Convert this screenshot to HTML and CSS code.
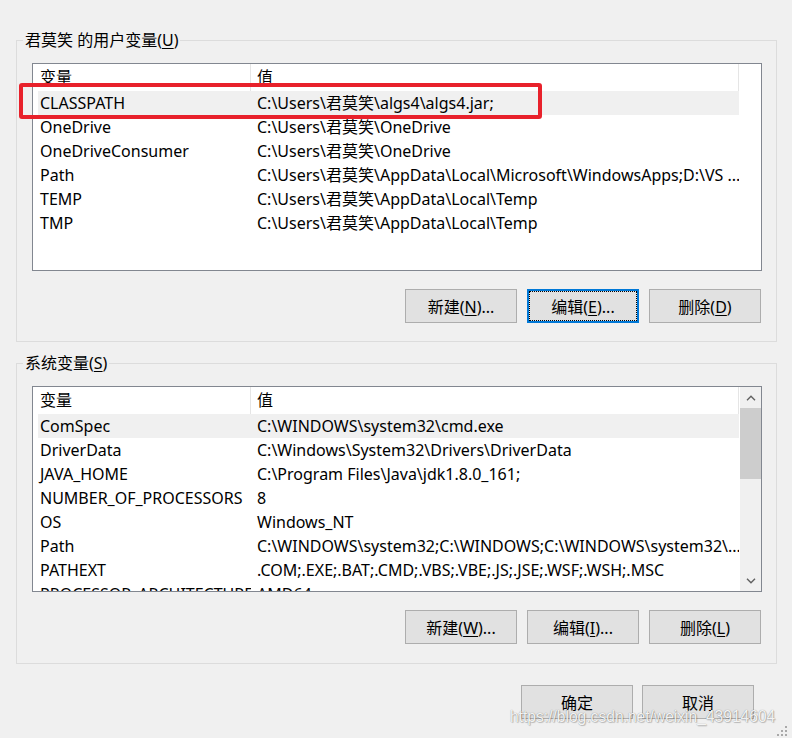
FILE: index.html
```html
<!DOCTYPE html>
<html lang="zh-CN">
<head>
    <meta charset="UTF-8">
    <meta name="viewport" content="width=device-width, initial-scale=1.0">
    <title>环境变量</title>
    <link rel="stylesheet" href="styles.css">
</head>
<body>
    <div class="dialog">
        <fieldset class="group">
            <legend>君莫笑 的用户变量(<u>U</u>)</legend>
            <div class="list">
                <div class="table">
                    <div class="head"><span class="col-name">变量</span><span class="col-value">值</span></div>
                    <div class="row selected"><span class="col-name">CLASSPATH</span><span class="col-value">C:\Users\君莫笑\algs4\algs4.jar;</span></div>
                    <div class="row"><span class="col-name">OneDrive</span><span class="col-value">C:\Users\君莫笑\OneDrive</span></div>
                    <div class="row"><span class="col-name">OneDriveConsumer</span><span class="col-value">C:\Users\君莫笑\OneDrive</span></div>
                    <div class="row"><span class="col-name">Path</span><span class="col-value">C:\Users\君莫笑\AppData\Local\Microsoft\WindowsApps;D:\VS ...</span></div>
                    <div class="row"><span class="col-name">TEMP</span><span class="col-value">C:\Users\君莫笑\AppData\Local\Temp</span></div>
                    <div class="row"><span class="col-name">TMP</span><span class="col-value">C:\Users\君莫笑\AppData\Local\Temp</span></div>
                </div>
            </div>
            <div class="buttons">
                <button class="btn">新建(<u>N</u>)...</button>
                <button class="btn focused">编辑(<u>E</u>)...</button>
                <button class="btn">删除(<u>D</u>)</button>
            </div>
        </fieldset>

        <fieldset class="group system">
            <legend>系统变量(<u>S</u>)</legend>
            <div class="list short">
                <div class="table">
                    <div class="head"><span class="col-name">变量</span><span class="col-value">值</span></div>
                    <div class="row selected"><span class="col-name">ComSpec</span><span class="col-value">C:\WINDOWS\system32\cmd.exe</span></div>
                    <div class="row"><span class="col-name">DriverData</span><span class="col-value">C:\Windows\System32\Drivers\DriverData</span></div>
                    <div class="row"><span class="col-name">JAVA_HOME</span><span class="col-value">C:\Program Files\Java\jdk1.8.0_161;</span></div>
                    <div class="row"><span class="col-name">NUMBER_OF_PROCESSORS</span><span class="col-value">8</span></div>
                    <div class="row"><span class="col-name">OS</span><span class="col-value">Windows_NT</span></div>
                    <div class="row"><span class="col-name">Path</span><span class="col-value">C:\WINDOWS\system32;C:\WINDOWS;C:\WINDOWS\system32\...</span></div>
                    <div class="row"><span class="col-name">PATHEXT</span><span class="col-value">.COM;.EXE;.BAT;.CMD;.VBS;.VBE;.JS;.JSE;.WSF;.WSH;.MSC</span></div>
                    <div class="row"><span class="col-name">PROCESSOR_ARCHITECTURE</span><span class="col-value">AMD64</span></div>
                </div>
                <div class="scrollbar">
                    <div class="scroll-btn">
                        <svg width="10" height="6" viewBox="0 0 10 6"><polyline points="1,5.2 5,1.2 9,5.2" fill="none" stroke="#606060" stroke-width="1.4"/></svg>
                    </div>
                    <div class="thumb"></div>
                    <div class="track"></div>
                    <div class="scroll-btn">
                        <svg width="10" height="6" viewBox="0 0 10 6"><polyline points="1,0.8 5,4.8 9,0.8" fill="none" stroke="#606060" stroke-width="1.4"/></svg>
                    </div>
                </div>
            </div>
            <div class="buttons">
                <button class="btn">新建(<u>W</u>)...</button>
                <button class="btn">编辑(<u>I</u>)...</button>
                <button class="btn">删除(<u>L</u>)</button>
            </div>
        </fieldset>

        <div class="footer">
            <button class="btn">确定</button>
            <button class="btn">取消</button>
        </div>

        <!-- red annotation over the CLASSPATH row -->
        <div class="highlight"></div>
        <div class="watermark">https://blog.csdn.net/weixin_43914604</div>
        <svg class="grip" width="12" height="12" viewBox="0 0 12 12">
            <rect x="9" y="1" width="2" height="2" fill="#a9a9a9"/>
            <rect x="5" y="5" width="2" height="2" fill="#a9a9a9"/>
            <rect x="9" y="5" width="2" height="2" fill="#a9a9a9"/>
            <rect x="1" y="9" width="2" height="2" fill="#a9a9a9"/>
            <rect x="5" y="9" width="2" height="2" fill="#a9a9a9"/>
            <rect x="9" y="9" width="2" height="2" fill="#a9a9a9"/>
        </svg>
    </div>
</body>
</html>
```

FILE: styles.css
```css
body {
    margin: 0;
    background: #f0f0f0;
    font-family: "Noto Sans", "Noto Sans CJK SC", sans-serif;
    font-size: 16px;
    color: #000;
    overflow: hidden;
}
.dialog {
    position: relative;
    height: 738px;
    padding: 30px 0 0 16px;
    box-sizing: border-box;
}
.group {
    width: 761px;
    min-width: 0;
    box-sizing: border-box;
    margin: 0;
    border: 1px solid #dcdcdc;
    padding: 13px 14px 18px 15px;
}
.group legend {
    padding: 0 2px;
    margin-left: -9px;
    line-height: 20px;
}
.group.system {
    margin-top: 11px;
    padding-bottom: 19px;
}
u {
    text-decoration-thickness: 1px;
    text-underline-offset: 2px;
}
.list {
    display: flex;
    height: 208px;
    box-sizing: border-box;
    border: 1px solid #828790;
    background: #fff;
    overflow: hidden;
}
.list.short {
    height: 206px;
}
.table {
    width: 706px;
    flex: none;
    padding-left: 5px;
    box-sizing: border-box;
}
.head {
    display: flex;
    height: 27px;
    line-height: 27px;
    border-right: 1px solid #e5e5e5;
}
.row {
    display: flex;
    height: 24px;
    line-height: 25px;
    white-space: nowrap;
}
.row.selected {
    background: #f0f0f0;
}
.col-name {
    width: 213px;
    flex: none;
    box-sizing: border-box;
    padding-left: 2px;
    overflow: hidden;
}
.head .col-name {
    border-right: 1px solid #e5e5e5;
}
.col-value {
    flex: 1;
    padding-left: 6px;
    overflow: hidden;
}
.scrollbar {
    width: 21px;
    margin-left: auto;
    display: flex;
    flex-direction: column;
    background: #f0f0f0;
}
.scroll-btn {
    height: 21px;
    display: flex;
    align-items: center;
    justify-content: center;
}
.thumb {
    height: 71px;
    background: #cdcdcd;
}
.track {
    flex: 1;
}
.buttons {
    display: flex;
    justify-content: flex-end;
    gap: 10px;
    margin-top: 18px;
    padding-right: 1px;
}
.btn {
    width: 112px;
    height: 34px;
    box-sizing: border-box;
    padding: 0;
    border: 1px solid #adadad;
    background: #e1e1e1;
    font-family: inherit;
    font-size: 16px;
    color: #000;
}
.btn.focused {
    border: 2px solid #0078d7;
    outline: 1px dotted #000;
    outline-offset: -3px;
}
.footer {
    display: flex;
    justify-content: flex-end;
    gap: 9px;
    width: 761px;
    padding-right: 23px;
    box-sizing: border-box;
    margin-top: 21px;
}
.highlight {
    position: absolute;
    left: 19px;
    top: 83px;
    width: 523px;
    height: 36px;
    box-sizing: border-box;
    border: 4px solid #e8212b;
    border-radius: 3px;
}
.watermark {
    position: absolute;
    left: 510px;
    top: 708px;
    font-family: "Liberation Sans", Arial, sans-serif;
    font-size: 15.6px;
    color: rgba(255, 255, 255, 0.92);
    text-shadow: 0 0 1px rgba(0, 0, 0, 0.45), 1px 1px 1px rgba(0, 0, 0, 0.2);
    white-space: nowrap;
}
.grip {
    position: absolute;
    right: 4px;
    bottom: 1px;
}
```
